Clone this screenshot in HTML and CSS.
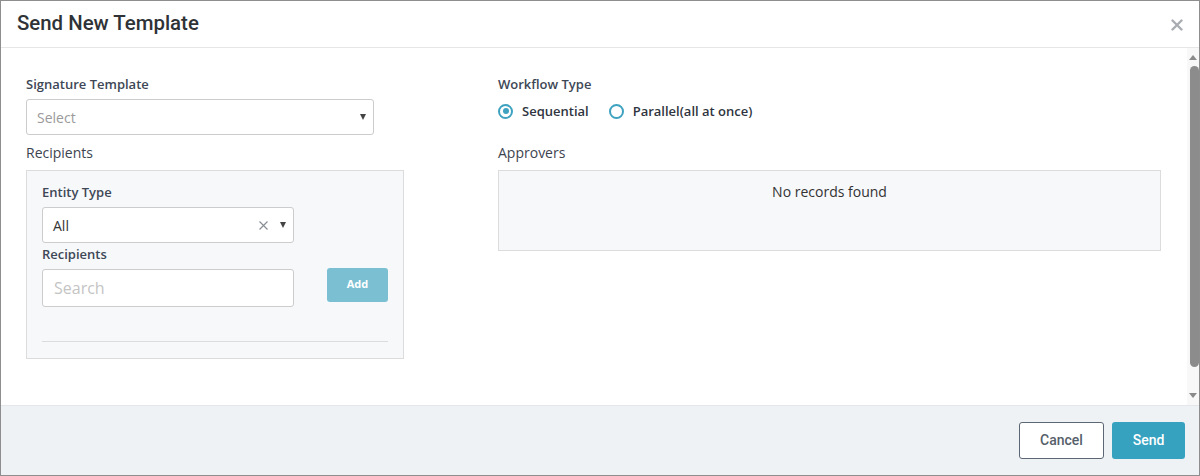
FILE: index.html
```html
<!DOCTYPE html>
<html lang="en">
<head>
    <meta charset="UTF-8">
    <title>Send New Template</title>
    <link rel="stylesheet" href="styles.css">
</head>
<body>
    <div class="modal">
        <div class="modal-header">
            <h1>Send New Template</h1>
            <span class="close">
                <svg width="12" height="12" viewBox="0 0 12 12"><path d="M1.5 1.5 L10.5 10.5 M10.5 1.5 L1.5 10.5" stroke="#a9adb2" stroke-width="2.4" stroke-linecap="round"/></svg>
            </span>
        </div>

        <div class="modal-body">
            <div class="content">
                <!-- left column -->
                <div class="col">
                    <label class="field-label">Signature Template</label>
                    <div class="select select-wide">
                        <span class="placeholder">Select</span>
                        <span class="caret"></span>
                    </div>

                    <div class="section-label">Recipients</div>
                    <div class="panel recipients-panel">
                        <label class="field-label">Entity Type</label>
                        <div class="select select-narrow">
                            <span class="value">All</span>
                            <span class="clear">
                                <svg width="9" height="9" viewBox="0 0 9 9"><path d="M0.5 0.5 L8.5 8.5 M8.5 0.5 L0.5 8.5" stroke="#8a8f96" stroke-width="1.2"/></svg>
                            </span>
                            <span class="caret"></span>
                        </div>
                        <label class="field-label">Recipients</label>
                        <div class="search-row">
                            <div class="search">Search</div>
                            <button class="btn-add">Add</button>
                        </div>
                        <div class="divider"></div>
                    </div>
                </div>

                <!-- right column -->
                <div class="col">
                    <label class="field-label">Workflow Type</label>
                    <div class="radios">
                        <span class="radio checked"></span>
                        <span class="radio-text">Sequential</span>
                        <span class="radio"></span>
                        <span class="radio-text">Parallel(all at once)</span>
                    </div>

                    <div class="section-label">Approvers</div>
                    <div class="panel approvers-panel">
                        <p class="empty">No records found</p>
                    </div>
                </div>
            </div>

            <div class="scrollbar">
                <span class="arrow-up"></span>
                <span class="thumb"></span>
                <span class="arrow-down"></span>
            </div>
        </div>

        <div class="modal-footer">
            <button class="btn-cancel">Cancel</button>
            <button class="btn-send">Send</button>
        </div>
    </div>
</body>
</html>
```

FILE: styles.css
```css
html, body {
    margin: 0;
    padding: 0;
}
body {
    font-family: "Open Sans", Arial, sans-serif;
    color: #333;
    background: #fff;
}
.modal {
    width: 1200px;
    height: 476px;
    box-sizing: border-box;
    border: 1px solid #8e8e8e;
    display: flex;
    flex-direction: column;
    overflow: hidden;
}
.modal-header {
    height: 46px;
    border-bottom: 1px solid #e6e6e6;
    display: flex;
    align-items: center;
    justify-content: space-between;
    padding: 0 16px 0 16px;
}
.modal-header h1 {
    margin: 0;
    font-family: Roboto, Arial, sans-serif;
    font-weight: 500;
    font-size: 20.4px;
    color: #2f3337;
    padding-bottom: 2px;
}
.close {
    display: flex;
    margin-top: 2px;
}
.modal-body {
    height: 357px;
    display: flex;
}
.content {
    flex: 1;
    display: grid;
    grid-template-columns: 378px 1fr;
    column-gap: 94px;
    padding: 27px 26px 0 25px;
    align-items: start;
}
.col {
    display: flex;
    flex-direction: column;
}
.field-label {
    display: block;
    font-size: 13px;
    font-weight: 600;
    line-height: 18px;
    color: #3d4756;
    margin-bottom: 6px;
}
.section-label {
    font-size: 14px;
    line-height: 20px;
    color: #3d4450;
    margin-top: 8px;
    margin-bottom: 7px;
}
.select {
    height: 36px;
    box-sizing: border-box;
    border: 1px solid #ccc;
    border-radius: 3px;
    background: #fff;
    display: flex;
    align-items: center;
    padding: 0 7px 0 10px;
    font-size: 14px;
}
.select-wide {
    width: 348px;
}
.select-narrow {
    width: 252px;
    margin-bottom: 2px;
}
.placeholder {
    flex: 1;
    color: #9a9a9a;
}
.value {
    flex: 1;
    color: #333;
}
.clear {
    display: flex;
    margin-right: 12px;
}
.caret {
    width: 0;
    height: 0;
    border-left: 3.5px solid transparent;
    border-right: 3.5px solid transparent;
    border-top: 6px solid #444;
}
.panel {
    background: #f7f8fa;
    border: 1px solid #dcdcdc;
}
.recipients-panel {
    padding: 12px 15px 16px 15px;
}
.search-row {
    display: flex;
    justify-content: space-between;
    align-items: flex-start;
}
.search {
    width: 252px;
    height: 38px;
    box-sizing: border-box;
    border: 1px solid #ccc;
    border-radius: 3px;
    background: #fff;
    font-size: 16px;
    color: #c4c4c4;
    line-height: 36px;
    padding-left: 11px;
}
.btn-add {
    width: 61px;
    height: 34px;
    margin-top: -1px;
    padding: 0 0 3px 0;
    background: #7bbfd3;
    border: none;
    border-radius: 3px;
    color: #fff;
    font-family: "Open Sans", Arial, sans-serif;
    font-weight: 700;
    font-size: 11px;
}
.divider {
    height: 1px;
    background: #dcdcdc;
    margin-top: 34px;
}
.radios {
    display: flex;
    align-items: center;
    height: 20px;
    margin-top: 2px;
    margin-bottom: 14px;
}
.radio {
    width: 15px;
    height: 15px;
    box-sizing: border-box;
    border: 2px solid #3ea2c0;
    border-radius: 50%;
    background: #fff;
    position: relative;
}
.radio.checked::after {
    content: "";
    position: absolute;
    left: 2.5px;
    top: 2.5px;
    width: 6px;
    height: 6px;
    border-radius: 50%;
    background: #3ea2c0;
}
.radio-text {
    font-size: 13px;
    font-weight: 600;
    color: #2f3540;
    margin-left: 9px;
    margin-right: 20px;
}
.approvers-panel {
    height: 79px;
}
.empty {
    margin: 11px 0 0 0;
    text-align: center;
    font-size: 14px;
    line-height: 20px;
    color: #333;
}
.scrollbar {
    width: 12px;
    background: #f8f8f8;
    display: flex;
    flex-direction: column;
    align-items: center;
}
.arrow-up {
    width: 0;
    height: 0;
    margin-top: 7px;
    border-left: 4px solid transparent;
    border-right: 4px solid transparent;
    border-bottom: 5px solid #8a8a8a;
}
.thumb {
    width: 9px;
    height: 301px;
    margin-top: 6px;
    margin-left: 2px;
    background: #8c8c8c;
    border-radius: 5px;
}
.arrow-down {
    width: 0;
    height: 0;
    margin-top: 26px;
    border-left: 4px solid transparent;
    border-right: 4px solid transparent;
    border-top: 5px solid #8a8a8a;
}
.modal-footer {
    flex: 1;
    border-top: 1px solid #e3e6ea;
    background: #eef2f5;
    display: flex;
    justify-content: flex-end;
    align-items: center;
    gap: 8px;
    padding: 0 14px 1px 0;
}
.modal-footer button {
    height: 37px;
    border-radius: 3px;
    font-family: Roboto, Arial, sans-serif;
    font-weight: 500;
    font-size: 14px;
    cursor: pointer;
}
.btn-cancel {
    width: 85px;
    background: #fff;
    border: 1px solid #5d6773;
    color: #56606b;
}
.btn-send {
    width: 73px;
    background: #36a2c0;
    border: none;
    color: #fff;
}
```
